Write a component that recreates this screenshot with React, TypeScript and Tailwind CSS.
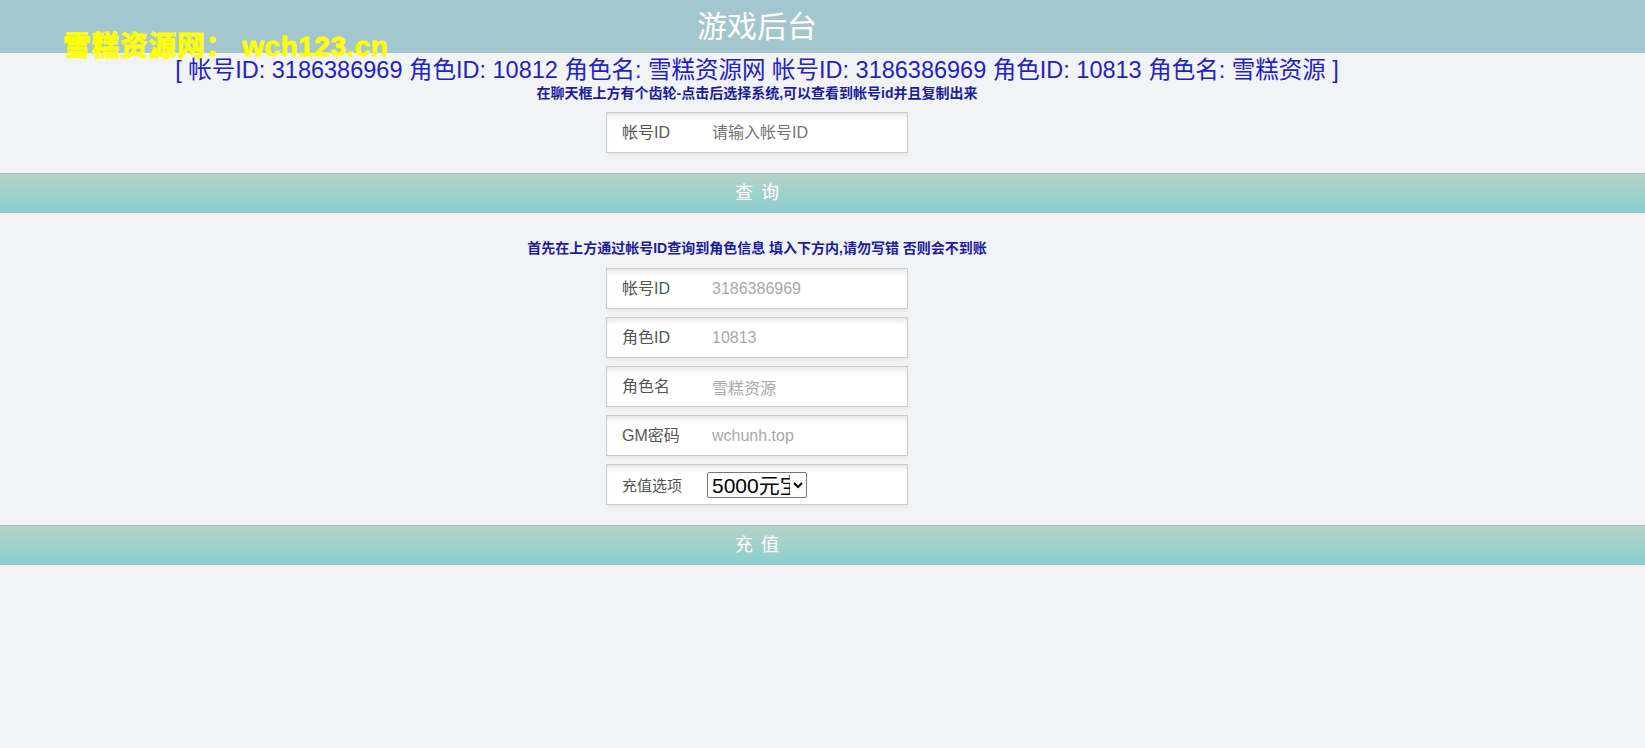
import React from 'react'

const fields = [
  { label: '帐号ID', value: '3186386969' },
  { label: '角色ID', value: '10813' },
  { label: '角色名', value: '雪糕资源' },
  { label: 'GM密码', value: 'wchunh.top' },
]

function Field({ label, value, placeholder }: { label: string; value?: string; placeholder?: string }) {
  return (
    <div className="w-[302px] h-[41px] bg-white border border-[#cccccc] shadow-[inset_0_5px_6px_-3px_rgba(0,0,0,0.12),0_3px_3px_-1px_rgba(0,0,0,0.05)] flex items-center pl-[15px]">
      <span className="w-[85px] text-[16px] text-[#555555]">{label}</span>
      <input
        readOnly
        defaultValue={value}
        placeholder={placeholder}
        className="flex-1 min-w-0 h-full bg-transparent outline-none px-[5px] text-[16px] text-[#a9a9a9] placeholder:text-[#757575]"
      />
    </div>
  )
}

function Bar({ text }: { text: string }) {
  return (
    <div className="w-full h-[40px] bg-gradient-to-b from-[#b5d3c9] to-[#8ccfcc] border-t border-b border-[#a4c3bb]">
      <div className="w-[1514px] h-full flex items-center justify-center text-white text-[18px] tracking-[8px] pl-[8px]">
        {text}
      </div>
    </div>
  )
}

export default function App() {
  return (
    <div className="relative min-h-[748px] bg-[#f2f3f5] font-['Liberation_Sans','Noto_Sans_CJK_SC',sans-serif]">
      <div className="absolute z-10 left-[63px] top-[31px] text-[28px] leading-[32px] font-bold text-[#ffff00] tracking-[0.5px] [-webkit-text-stroke:0.8px_#ffff00]">
        雪糕资源网： wch123.cn
      </div>

      <div className="w-full h-[53px] bg-[#a4c7cf]">
        <div className="w-[1514px] h-full flex items-center justify-center text-white text-[30px]">
          游戏后台
        </div>
      </div>

      <div className="w-[1514px] flex flex-col items-center">
        <div className="mt-[2px] text-[23.5px] leading-[30px] text-[#2222c4] whitespace-nowrap">
          [ 帐号ID: 3186386969 角色ID: 10812 角色名: 雪糕资源网 帐号ID: 3186386969 角色ID: 10813 角色名: 雪糕资源 ]
        </div>
        <div className="text-[14px] leading-[16px] font-bold text-[#1b1b9c] whitespace-nowrap">
          在聊天框上方有个齿轮-点击后选择系统,可以查看到帐号id并且复制出来
        </div>
        <div className="mt-[11px]">
          <Field label="帐号ID" placeholder="请输入帐号ID" />
        </div>
      </div>

      <div className="mt-[20px]">
        <Bar text="查询" />
      </div>

      <div className="w-[1514px] flex flex-col items-center">
        <div className="mt-[27px] text-[14px] leading-[17px] font-bold text-[#1b1b9c] whitespace-nowrap">
          首先在上方通过帐号ID查询到角色信息 填入下方内,请勿写错 否则会不到账
        </div>
        <div className="mt-[11px] flex flex-col gap-[8px]">
          {fields.map((f) => (
            <Field key={f.label} label={f.label} value={f.value} />
          ))}
          <div className="w-[302px] h-[41px] bg-white border border-[#cccccc] shadow-[inset_0_5px_6px_-3px_rgba(0,0,0,0.12),0_3px_3px_-1px_rgba(0,0,0,0.05)] flex items-center pl-[15px]">
            <span className="w-[85px] text-[15px] text-[#555555] pt-[4px]">充值选项</span>
            <select className="w-[100px] h-[26px] text-[21px] leading-[24px] text-black bg-white border border-[#767676] rounded-[2px] font-['Liberation_Sans','Noto_Sans_CJK_SC',sans-serif]">
              <option>5000元宝</option>
              <option>10000元宝</option>
            </select>
          </div>
        </div>
      </div>

      <div className="mt-[20px]">
        <Bar text="充值" />
      </div>
    </div>
  )
}
